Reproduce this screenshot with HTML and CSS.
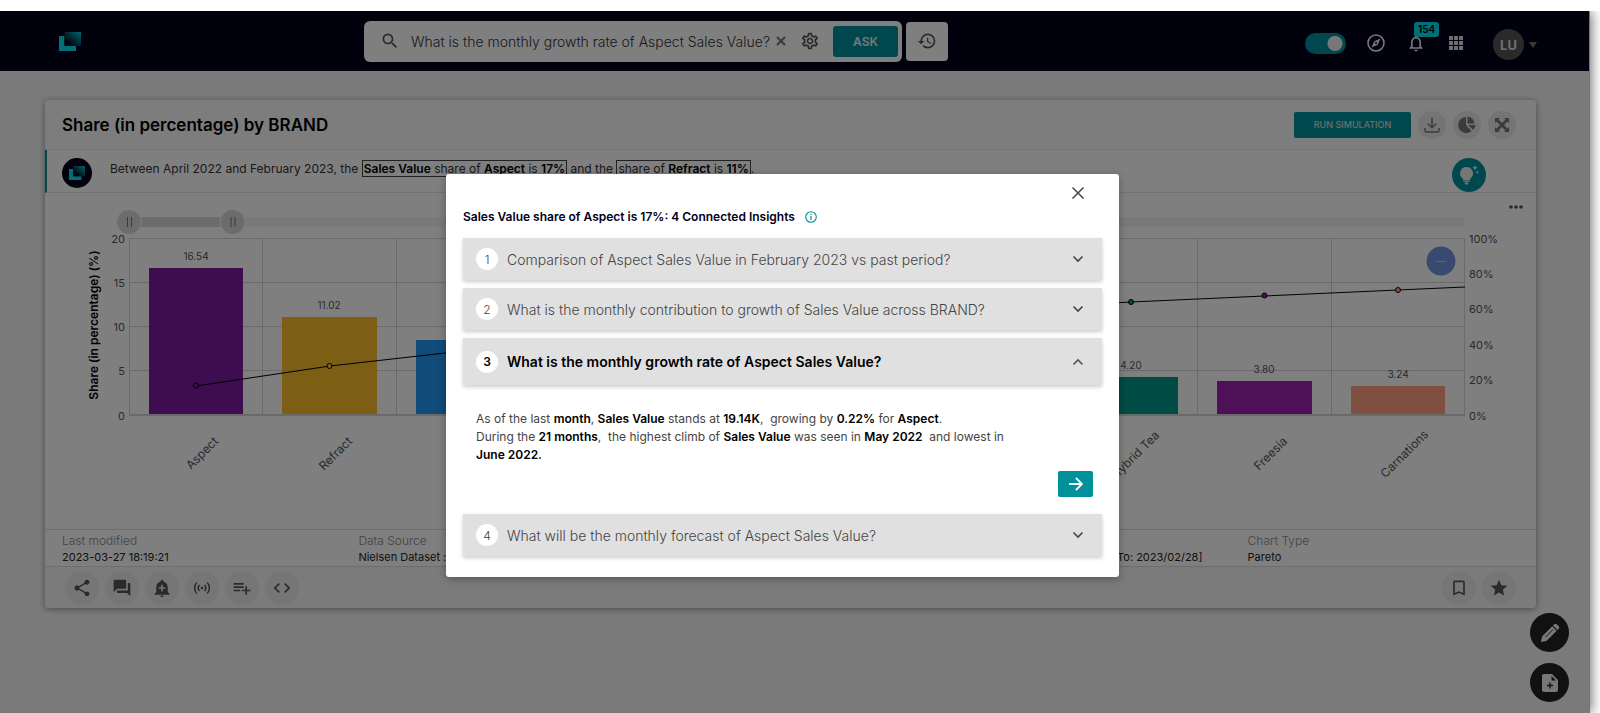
FILE: index.html
```html
<!DOCTYPE html>
<html lang="en">
<head>
<meta charset="utf-8">
<title>Share (in percentage) by BRAND</title>
<link rel="stylesheet" href="styles.css">
</head>
<body>
<svg class="defs" aria-hidden="true">
  <defs>
    <linearGradient id="fold" x1="0.1" y1="0.9" x2="1" y2="0"><stop offset="0.1" stop-color="#02001a"/><stop offset="1" stop-color="#00d0dc"/></linearGradient>
    <symbol id="logo" viewBox="0 0 22 19"><path d="M0 4h5.500v10H17v5H0z" fill="#00e0ec"/><path d="M5.500 0H22v14H5.500z" fill="url(#fold)"/></symbol>
    <symbol id="chevron" viewBox="0 0 12 8"><path d="M1.500 1.500L6 6l4.500-4.500" fill="none" stroke="currentColor" stroke-width="1.600"/></symbol>
  </defs>
</svg>
<div class="window">
  <header class="topbar">
    <a class="brand" href="#" aria-label="Home"><svg width="22" height="19"><use href="#logo"/></svg></a>
    <div class="search-group">
      <form class="search">
        <svg class="search-icon" width="20" height="20" viewBox="0 0 24 24"><path fill="#555" d="M15.500 14h-.79l-.28-.27A6.471 6.471 0 0 0 16 9.500 6.500 6.500 0 1 0 9.500 16c1.610 0 3.090-.59 4.230-1.570l.27.28v.79l5 4.990L20.490 19l-4.990-5zm-6 0C7.010 14 5 11.990 5 9.500S7.010 5 9.500 5 14 7.010 14 9.500 11.990 14 9.500 14z"/></svg>
        <input class="search-input" type="text" aria-label="Ask a question" value="What is the monthly growth rate of Aspect Sales Value?">
        <button class="plain" type="button" aria-label="Clear"><svg width="10" height="10" viewBox="0 0 10 10"><path d="M1 1l8 8M9 1L1 9" stroke="#777" stroke-width="2.200"/></svg></button>
        <button class="plain gear" type="button" aria-label="Settings"><svg width="20" height="20" viewBox="0 0 24 24"><path fill="#555" d="M19.430 12.980c.04-.32.07-.64.07-.98s-.03-.66-.07-.98l2.110-1.650c.19-.15.24-.42.12-.64l-2-3.460c-.12-.22-.39-.3-.61-.22l-2.490 1c-.52-.4-1.080-.73-1.690-.98l-.38-2.650C14.460 2.180 14.250 2 14 2h-4c-.25 0-.46.18-.49.42l-.38 2.650c-.61.25-1.170.59-1.690.98l-2.490-1c-.23-.09-.49 0-.61.22l-2 3.460c-.13.22-.07.49.12.64l2.110 1.650c-.04.32-.07.65-.07.98s.03.66.07.98l-2.110 1.650c-.19.15-.24.42-.12.64l2 3.460c.12.22.39.3.61.22l2.490-1c.52.4 1.080.73 1.690.98l.38 2.650c.03.24.24.42.49.42h4c.25 0 .46-.18.49-.42l.38-2.650c.61-.25 1.170-.59 1.690-.98l2.490 1c.23.09.49 0 .61-.22l2-3.460c.12-.22.07-.49-.12-.64l-2.110-1.650zm-1.980-1.710c.04.31.05.52.05.73s-.02.43-.05.73l-.14 1.130.89.7 1.080.84-.7 1.210-1.270-.51-1.040-.42-.9.68c-.43.32-.84.56-1.250.73l-1.060.43-.16 1.130-.2 1.350h-1.400l-.19-1.350-.16-1.130-1.060-.43c-.43-.18-.83-.41-1.230-.71l-.91-.7-1.060.43-1.270.51-.7-1.210 1.080-.84.89-.7-.14-1.130c-.03-.31-.05-.54-.05-.74s.02-.43.05-.73l.14-1.130-.89-.7-1.080-.84.7-1.210 1.270.51 1.040.42.9-.68c.43-.32.84-.56 1.250-.73l1.060-.43.16-1.130.2-1.350h1.390l.19 1.350.16 1.130 1.060.43c.43.18.83.41 1.230.71l.91.7 1.060-.43 1.270-.51.7 1.210-1.070.85-.89.7.14 1.130zM12 8c-2.210 0-4 1.790-4 4s1.790 4 4 4 4-1.790 4-4-1.790-4-4-4zm0 6c-1.100 0-2-.9-2-2s.9-2 2-2 2 .9 2 2-.9 2-2 2z"/></svg></button>
        <button class="ask" type="submit">ASK</button>
      </form>
      <button class="history" type="button" aria-label="History"><svg width="20" height="20" viewBox="0 0 24 24"><path fill="#555" d="M13 3a9 9 0 0 0-9 9H1l3.890 3.890.07.14L9 12H6c0-3.870 3.130-7 7-7s7 3.130 7 7-3.130 7-7 7a6.940 6.940 0 0 1-4.940-2.060l-1.420 1.420A8.954 8.954 0 0 0 13 21a9 9 0 0 0 0-18zm-1 5v5l4.280 2.540.72-1.210-3.500-2.080V8H12z"/></svg></button>
    </div>
    <nav class="tools">
      <input class="switch" type="checkbox" checked aria-label="Toggle insights mode">
      <button class="plain" type="button" aria-label="Explore"><svg width="18" height="18" viewBox="0 0 18 18"><circle cx="9" cy="9" r="8" fill="none" stroke="#eee" stroke-width="1.600"/><path fill="#eee" fill-rule="evenodd" d="M13.500 4.500L10.700 10.700 4.500 13.500 7.300 7.300zM9 8a1 1 0 1 0 0 2 1 1 0 0 0 0-2z"/></svg></button>
      <button class="plain bell" type="button" aria-label="Notifications"><svg width="20" height="20" viewBox="0 0 24 24"><path fill="#eee" d="M12 22c1.100 0 2-.9 2-2h-4c0 1.100.89 2 2 2zm6-6v-5c0-3.070-1.640-5.640-4.500-6.320V4a1.500 1.500 0 0 0-3 0v.68C7.630 5.360 6 7.920 6 11v5l-2 2v1h16v-1l-2-2zm-2 1H8v-6c0-2.480 1.510-4.500 4-4.500s4 2.020 4 4.500v6z"/></svg><span class="badge">154</span></button>
      <button class="plain" type="button" aria-label="Apps"><svg width="14" height="14" viewBox="0 0 14 14"><path fill="#ddd" d="M0 0h4v4H0zM5 0h4v4H5zM10 0h4v4h-4zM0 5h4v4H0zM5 5h4v4H5zM10 5h4v4h-4zM0 10h4v4H0zM5 10h4v4H5zM10 10h4v4h-4z"/></svg></button>
      <button class="plain user" type="button"><span class="avatar">LU</span><svg width="8" height="6" viewBox="0 0 8 6"><path d="M0 0h8L4 6z" fill="#777"/></svg></button>
    </nav>
  </header>

  <main class="content">
    <article class="card">
      <div class="card-head">
        <h1>Share (in percentage) by BRAND</h1>
        <button class="run" type="button">RUN SIMULATION</button>
        <button class="round small" type="button" aria-label="Download"><svg width="16" height="16" viewBox="0 0 16 16"><path d="M8 0.500v10M4 6.800l4 4 4-4M1 11v2.500Q1 15 2.500 15h11q1.500 0 1.500-1.500V11" fill="none" stroke="#777" stroke-width="1.500"/></svg></button>
        <button class="round small" type="button" aria-label="Chart type"><svg width="18" height="18" viewBox="0 0 18 18" fill="#777"><path d="M8 1v8l5.500 6A8 8 0 1 1 8 1z"/><path d="M9.500 0.500A7.500 7.500 0 0 1 16.500 7.500h-7z"/><path d="M10.500 9H17.500a8 8 0 0 1-2.500 5z"/></svg></button>
        <button class="round small" type="button" aria-label="Expand"><svg width="14" height="14" viewBox="0 0 14 14"><path fill="#777" d="M0 0h5L3.500 1.500 7 5l3.500-3.500L9 0h5v5l-1.500-1.500L9 7l3.500 3.500L14 9v5H9l1.500-1.500L7 9l-3.500 3.500L5 14H0V9l1.500 1.500L5 7 1.500 3.500 0 5z"/></svg></button>
      </div>
      <div class="insight">
        <span class="insight-logo"><svg width="16" height="16" viewBox="0 0 22 19"><use href="#logo"/></svg></span>
        <p>Between April 2022 and February 2023, the <span class="boxed"><b>Sales Value</b> share of <b>Aspect</b> is <b>17%</b></span> and the <span class="boxed">share of <b>Refract</b> is <b>11%</b></span>.</p>
        <button class="bulb" type="button" aria-label="Insights"><svg width="20" height="20" viewBox="0 0 20 20" fill="#eee"><path d="M7.500 2a6.500 6.500 0 0 0-4 11.600l.8 1.400h6.400l.8-1.400A6.500 6.500 0 0 0 7.500 2zM4.200 15.600h6.600v1.200H4.200zM5.300 17.400h4.400L8.500 19.500h-2z"/><path d="M16 0l.8 2 2 .8-2 .8-.8 2-.8-2-2-.8 2-.8zM18.300 5.600l.5 1.200 1.200.5-1.200.5-.5 1.200-.5-1.200-1.200-.5 1.200-.5z"/></svg></button>
      </div>

      <div class="chart">
        <svg class="plot" viewBox="45 193 1491 336" role="img" aria-label="Pareto chart of share by brand">
          <rect x="129" y="217" width="1336" height="10" rx="5" fill="#f3f3f3"/>
          <rect x="129" y="217" width="104" height="10" fill="#d9d9d9"/>
          <g fill="#d9d9d9" stroke="#fff"><circle cx="129" cy="222" r="12.500"/><circle cx="232.500" cy="222" r="12.500"/></g>
          <path d="M127.500 217v10M131.500 217v10M231 217v10M235 217v10" stroke="#777"/>
          <path class="grid" d="M129 238.500H1465M129 282.500H1465M129 326.500H1465M129 370.500H1465M129.500 238V415M262.500 238V415M396.500 238V415M529.500 238V415M663.500 238V415M797.500 238V415M930.500 238V415M1064.500 238V415M1197.500 238V415M1331.500 238V415M1464.500 238V415"/>
          <path class="axis" d="M129 415H1465"/>
          <rect x="149" y="268" width="94" height="146" fill="#7b1b9f"/>
          <rect x="282" y="317" width="95" height="97" fill="#fbbc2a"/>
          <rect x="416" y="340" width="94" height="74" fill="#2296f3"/>
          <rect x="1084" y="377" width="94" height="37" fill="#009888"/>
          <rect x="1217" y="381" width="95" height="33" fill="#9c23b0"/>
          <rect x="1351" y="386" width="94" height="28" fill="#ffa182"/>
          <polyline points="196,386 330,366 463,351 597,338 730,326 864,316 998,309 1131,302 1264,296 1398,290 1465,287" fill="none" stroke="#000"/>
          <g stroke="#000"><circle cx="196" cy="385.500" r="2.500" fill="#7b1b9f"/><circle cx="329.500" cy="366" r="2.500" fill="#fbbc2a"/><circle cx="1131" cy="302" r="2.500" fill="#009888"/><circle cx="1264.500" cy="295.500" r="2.500" fill="#9c23b0"/><circle cx="1398" cy="290" r="2.500" fill="#ffa182"/></g>
          <g class="value"><text x="196" y="260">16.54</text><text x="329" y="309">11.02</text><text x="1131" y="369">4.20</text><text x="1264" y="373">3.80</text><text x="1398" y="378">3.24</text></g>
          <g class="tick end"><text x="125" y="243">20</text><text x="125" y="287">15</text><text x="125" y="331">10</text><text x="125" y="375">5</text><text x="125" y="420">0</text></g>
          <g class="tick"><text x="1469" y="243">100%</text><text x="1469" y="278">80%</text><text x="1469" y="313">60%</text><text x="1469" y="349">40%</text><text x="1469" y="384">20%</text><text x="1469" y="420">0%</text></g>
          <text class="axis-title" transform="translate(98 325) rotate(-90)">Share (in percentage) (%)</text>
          <g class="tick category end">
            <text transform="translate(219 442) rotate(-45)">Aspect</text>
            <text transform="translate(353 442) rotate(-45)">Refract</text>
            <text transform="translate(1160 436) rotate(-45)">Hybrid Tea</text>
            <text transform="translate(1288 442) rotate(-45)">Freesia</text>
            <text transform="translate(1429 435) rotate(-45)">Carnations</text>
          </g>
          <circle cx="1441" cy="261" r="14.500" fill="#7295e0"/><path d="M1436 261.500h10" stroke="#bcd"/>
        </svg>
        <button class="plain more" type="button" aria-label="More"><svg width="14" height="4" viewBox="0 0 14 4" fill="#555"><circle cx="2" cy="2" r="1.800"/><circle cx="7" cy="2" r="1.800"/><circle cx="12" cy="2" r="1.800"/></svg></button>
      </div>

      <dl class="meta">
        <div><dt>Last modified</dt><dd>2023-03-27 18:19:21</dd></div>
        <div class="wide"><dt>Data Source</dt><dd>Nielsen Dataset :</dd></div>
        <div><dt>Period</dt><dd>Time Period [From: 2022/04/01 To: 2023/02/28]</dd></div>
        <div><dt>Chart Type</dt><dd>Pareto</dd></div>
      </dl>
      <div class="actions">
        <button class="round" type="button" aria-label="Share"><svg width="20" height="20" viewBox="0 0 24 24"><path d="M18 16.080c-.76 0-1.440.3-1.960.77L8.910 12.700c.05-.23.09-.46.09-.7s-.04-.47-.09-.7l7.050-4.110A3 3 0 1 0 15 5c0 .24.04.47.09.7L8.040 9.810a3 3 0 1 0 0 4.380l7.120 4.160c-.05.21-.08.43-.08.65a2.920 2.920 0 1 0 2.920-2.920z"/></svg></button>
        <button class="round" type="button" aria-label="Comments"><svg width="20" height="20" viewBox="0 0 24 24"><path d="M21 6h-2v9H6v2c0 .55.45 1 1 1h11l4 4V7c0-.55-.45-1-1-1zm-4 6V3c0-.55-.45-1-1-1H3c-.55 0-1 .45-1 1v14l4-4h10c.55 0 1-.45 1-1z"/></svg></button>
        <button class="round" type="button" aria-label="Add alert"><svg width="20" height="20" viewBox="0 0 24 24"><path d="M10.010 21.010c0 1.100.89 1.990 1.990 1.990s1.990-.89 1.990-1.990h-3.980zm8.870-4.190V11c0-3.250-2.250-5.970-5.290-6.690v-.72a1.590 1.590 0 1 0-3.180 0v.72C7.370 5.030 5.120 7.750 5.120 11v5.820L3 18.940V20h18v-1.060l-2.120-2.120zM16 13.010h-3v3h-2v-3H8V11h3V8h2v3h3v2.010z"/></svg></button>
        <button class="round" type="button" aria-label="Live"><svg width="18" height="18" viewBox="0 0 18 18"><circle cx="9" cy="9" r="1.300"/><path d="M6.500 6a4.500 4.500 0 0 0 0 6M11.500 6a4.500 4.500 0 0 1 0 6M3.800 3.500a8 8 0 0 0 0 11M14.200 3.500a8 8 0 0 1 0 11" fill="none" stroke="#555" stroke-width="1.500"/></svg></button>
        <button class="round" type="button" aria-label="Add to list"><svg width="20" height="20" viewBox="0 0 24 24"><path d="M14 10H2v2h12v-2zm0-4H2v2h12V6zm4 8v-4h-2v4h-4v2h4v4h2v-4h4v-2h-4zM2 16h8v-2H2v2z"/></svg></button>
        <button class="round" type="button" aria-label="Embed"><svg width="20" height="20" viewBox="0 0 24 24"><path d="M9.400 16.600L4.800 12l4.600-4.600L8 6l-6 6 6 6 1.400-1.400zm5.200 0l4.600-4.600-4.600-4.600L16 6l6 6-6 6-1.400-1.400z"/></svg></button>
        <button class="round push" type="button" aria-label="Bookmark"><svg width="20" height="20" viewBox="0 0 24 24"><path d="M17 3H7c-1.100 0-2 .9-2 2v16l7-3 7 3V5c0-1.100-.9-2-2-2zm0 15l-5-2.180L7 18V5h10v13z"/></svg></button>
        <button class="round" type="button" aria-label="Favourite"><svg width="20" height="20" viewBox="0 0 24 24"><path d="M12 17.270L18.180 21l-1.640-7.030L22 9.240l-7.190-.61L12 2 9.190 8.630 2 9.240l5.460 4.730L5.820 21z"/></svg></button>
      </div>
    </article>
  </main>

  <div class="fabs">
    <button class="fab" type="button" aria-label="Edit"><svg width="20" height="20" viewBox="0 0 20 20"><path fill="#eee" d="M1 19l1-5.500L12.200 3.300l4.500 4.500L6.500 18zM13 2.500l1.300-1.300q1.200-1 2.400 0l2.100 2.100q1 1.200 0 2.400L17.500 7z"/><path d="M5.500 14L13 6.500" stroke="#333"/></svg></button>
    <button class="fab" type="button" aria-label="Add note"><svg width="16" height="18" viewBox="0 0 16 18"><path fill="#eee" d="M2 0h8l6 6v10q0 2-2 2H2q-2 0-2-2V2q0-2 2-2z"/><path d="M9.500 2v4.500H14z" fill="#222"/><path d="M8 8.500v6M5 11.500h6" stroke="#222" stroke-width="1.400"/></svg></button>
  </div>

  <div class="overlay">
    <section class="modal" role="dialog" aria-modal="true" aria-labelledby="dialog-title">
      <button class="plain close" type="button" aria-label="Close"><svg width="12" height="12" viewBox="0 0 12 12"><path d="M.5.5l11 11M11.500.5l-11 11" stroke="#444" stroke-width="1.500"/></svg></button>
      <h2 id="dialog-title">Sales Value share of Aspect is 17%: 4 Connected Insights <svg width="12" height="12" viewBox="0 0 12 12"><circle cx="6" cy="6" r="5.300" fill="none" stroke="#00919b" stroke-width="1.100"/><path d="M6 5v4M6 2.800v1.300" stroke="#00919b" stroke-width="1.200"/></svg></h2>
      <div class="accordion">
        <button class="row" type="button"><span class="num">1</span><span class="q">Comparison of Aspect Sales Value in February 2023 vs past period?</span><svg width="12" height="8"><use href="#chevron"/></svg></button>
        <button class="row" type="button"><span class="num">2</span><span class="q">What is the monthly contribution to growth of Sales Value across BRAND?</span><svg width="12" height="8"><use href="#chevron"/></svg></button>
        <div class="open">
          <button class="row active" type="button" aria-expanded="true"><span class="num">3</span><span class="q">What is the monthly growth rate of Aspect Sales Value?</span><svg class="up" width="12" height="8"><use href="#chevron"/></svg></button>
          <div class="answer">
            <p>As of the last <b>month</b>, <b>Sales Value</b> stands at <b>19.14K</b>,&nbsp; growing by <b>0.22%</b> for <b>Aspect</b>.<br>During the <b>21 months</b>,&nbsp; the highest climb of <b>Sales Value</b> was seen in <b>May 2022</b>&nbsp; and lowest in<br><b>June 2022.</b></p>
            <button class="go" type="button" aria-label="Open insight"><svg width="14" height="14" viewBox="0 0 14 14"><path d="M0 7h12.500M7 1l6 6-6 6" fill="none" stroke="#fff" stroke-width="1.800"/></svg></button>
          </div>
        </div>
        <button class="row" type="button"><span class="num">4</span><span class="q">What will be the monthly forecast of Aspect Sales Value?</span><svg width="12" height="8"><use href="#chevron"/></svg></button>
      </div>
    </section>
  </div>
</div>
</body>
</html>
```
FILE: styles.css
```css
* { box-sizing: border-box; }
body {
  margin: 0;
  min-height: 100vh;
  display: flex;
  padding: 11px 11px 0 0;
  background: #fff;
  font-family: Inter, "Liberation Sans", sans-serif;
  color: #222;
}
.defs { position: absolute; width: 0; height: 0; }
.window {
  position: relative;
  flex: 1;
  min-width: 0;
  background: #f4f4f4;
  box-shadow: 1px 0 0 #777, 2px 0 12px 0 rgba(0, 0, 0, .6);
  clip-path: inset(0 -11px 0 0);
}
button { font: inherit; border: 0; padding: 0; cursor: pointer; }
.plain { display: flex; align-items: center; background: none; }
h1, h2, p, dl, dd { margin: 0; }
b { font-weight: 600; color: #000; }

.topbar {
  display: grid;
  grid-template-columns: 364px auto 1fr;
  align-items: center;
  height: 60px;
  background: #02001a;
}
.brand { padding-left: 59px; display: flex; }
.search-group { display: flex; align-items: center; gap: 4px; }
.search {
  display: flex;
  align-items: center;
  width: 538px;
  height: 41px;
  padding: 0 4px 0 16px;
  border-radius: 6px;
  background: #fff;
}
.search-icon { flex: none; }
.search-input {
  flex: 1;
  min-width: 0;
  margin-left: 11px;
  padding: 0;
  border: 0;
  outline: 0;
  background: none;
  font: 300 14px Inter, "Liberation Sans", sans-serif;
  color: #333;
}
.gear { margin: 0 13px 0 14px; }
.ask {
  width: 65px;
  height: 31px;
  border-radius: 3px;
  background: #00919b;
  color: #eee;
  font-size: 12px;
  font-weight: 600;
}
.history {
  display: grid;
  place-items: center;
  width: 42px;
  height: 39px;
  border-radius: 4px;
  background: #fff;
}
.tools { display: flex; align-items: center; justify-content: flex-end; padding: 4px 52px 0 0; }
.switch {
  appearance: none;
  width: 41px;
  height: 21px;
  margin: 0 21px 0 0;
  border-radius: 11px;
  background: radial-gradient(circle at 30px 50%, #eee 7px, #00919b 8px);
}
.bell { position: relative; margin: 0 23px 0 21px; }
.badge {
  position: absolute;
  left: 8px;
  top: -11px;
  padding: 0 4px;
  border-radius: 3px;
  background: #00e0f0;
  color: #000;
  font-size: 10px;
  line-height: 15px;
  font-weight: 600;
}
.user { gap: 5px; margin-left: 30px; padding-top: 3px; }
.avatar {
  display: grid;
  place-items: center;
  width: 31px;
  height: 31px;
  border-radius: 50%;
  background: #555;
  color: #ddd;
  font-size: 13px;
  font-weight: 700;
}

.content { padding: 29px 53px 0 45px; }
.card { border-radius: 4px; background: #fff; box-shadow: 0 1px 6px rgba(0, 0, 0, .4); }
.card-head {
  display: flex;
  align-items: center;
  gap: 7px;
  height: 50px;
  padding: 0 20px 0 17px;
  border-bottom: 1px solid #e4e4e4;
  border-radius: 4px 4px 0 0;
  background: #fafafa;
}
h1 { flex: 1; font-size: 17px; line-height: 24px; font-weight: 600; color: #000; }
.run {
  width: 117px;
  height: 26px;
  border-radius: 2px;
  background: #00919b;
  color: #ddd;
  font-size: 9px;
  font-weight: 500;
}
.round {
  display: grid;
  place-items: center;
  flex: none;
  width: 34px;
  height: 34px;
  border-radius: 50%;
  background: #ececec;
  fill: #555;
}
.small { width: 28px; height: 28px; background: #e8e8e8; }
.insight {
  display: flex;
  align-items: flex-end;
  height: 43px;
  padding: 0 50px 0 15px;
  border-left: 2px solid #00919b;
  border-bottom: 1px solid #e4e4e4;
}
.insight-logo {
  display: grid;
  place-items: center;
  width: 30px;
  height: 30px;
  margin-bottom: 4px;
  border-radius: 50%;
  background: #02001a;
}
.insight p { flex: 1; padding: 0 0 16px 18px; font-size: 12px; line-height: 14px; color: #333; }
.boxed { border: 1px solid #444; padding: 0 1px; }
.bulb {
  display: grid;
  place-items: center;
  width: 34px;
  height: 34px;
  border-radius: 50%;
  background: #00919b;
}
.chart { position: relative; }
.plot { display: block; width: 100%; height: auto; fill: #555; }
.more { position: absolute; top: 12px; right: 13px; }
.grid { stroke: #d4d4d4; fill: none; }
.axis { stroke: #d4d4d4; stroke-width: 2; }
.value { font-size: 10px; text-anchor: middle; }
.tick { font-size: 11px; }
.category { font-size: 12px; }
.end { text-anchor: end; }
.axis-title { font-size: 12px; font-weight: 600; fill: #000; text-anchor: middle; }

.meta {
  display: grid;
  grid-template-columns: repeat(5, minmax(0, 1fr));
  height: 38px;
  padding: 2px 0 0 9px;
  border-top: 1px solid #dcdcdc;
  border-bottom: 1px solid #dcdcdc;
}
.meta div { padding-left: 8px; white-space: nowrap; }
.meta .wide { grid-column: span 2; }
dt { font-size: 12px; line-height: 18px; font-weight: 300; color: #888; }
dd { font-size: 11px; line-height: 15px; color: #222; }
.actions { display: flex; gap: 6px; padding: 4px 20px 3px; border-radius: 0 0 4px 4px; background: #f6f6f6; }
.push { margin-left: auto; }

.fabs { position: absolute; right: 20px; top: 602px; display: grid; gap: 11px; }
.fab { display: grid; place-items: center; width: 39px; height: 39px; border-radius: 50%; background: #222; }

.overlay {
  position: absolute;
  inset: 0;
  display: flex;
  align-items: flex-start;
  justify-content: center;
  padding: 163px 24px 0 0;
  background: rgba(0, 0, 0, .5);
}
.modal {
  width: 673px;
  padding: 13px 17px 21px;
  border-radius: 3px;
  background: #fff;
  box-shadow: 0 2px 8px rgba(0, 0, 0, .3);
}
.close { margin: 0 18px 0 auto; }
h2 { display: flex; align-items: center; gap: 10px; margin: 9px 0 12px; font-size: 12px; line-height: 18px; font-weight: 600; color: #02001a; }
.accordion { display: grid; gap: 8px; }
.row {
  display: flex;
  align-items: center;
  width: 100%;
  height: 42px;
  padding: 0 18px 0 13px;
  background: #e0e0e0;
  box-shadow: 0 2px 4px rgba(0, 0, 0, .2);
  text-align: left;
  color: #444;
  font-size: 14px;
  font-weight: 300;
}
.num {
  display: grid;
  place-items: center;
  width: 22px;
  height: 22px;
  border-radius: 50%;
  background: #fff;
  font-size: 12px;
}
.q { flex: 1; padding-left: 9px; }
.active { height: 47px; color: #000; font-weight: 600; }
.active svg { color: #555; }
.up { transform: rotate(180deg); }
.answer { padding: 25px 9px 9px 13px; }
.answer p { font-size: 12px; line-height: 18px; color: #444; }
.go {
  display: grid;
  place-items: center;
  width: 35px;
  height: 26px;
  margin: 7px 0 0 auto;
  border-radius: 2px;
  background: #00919b;
}
```
